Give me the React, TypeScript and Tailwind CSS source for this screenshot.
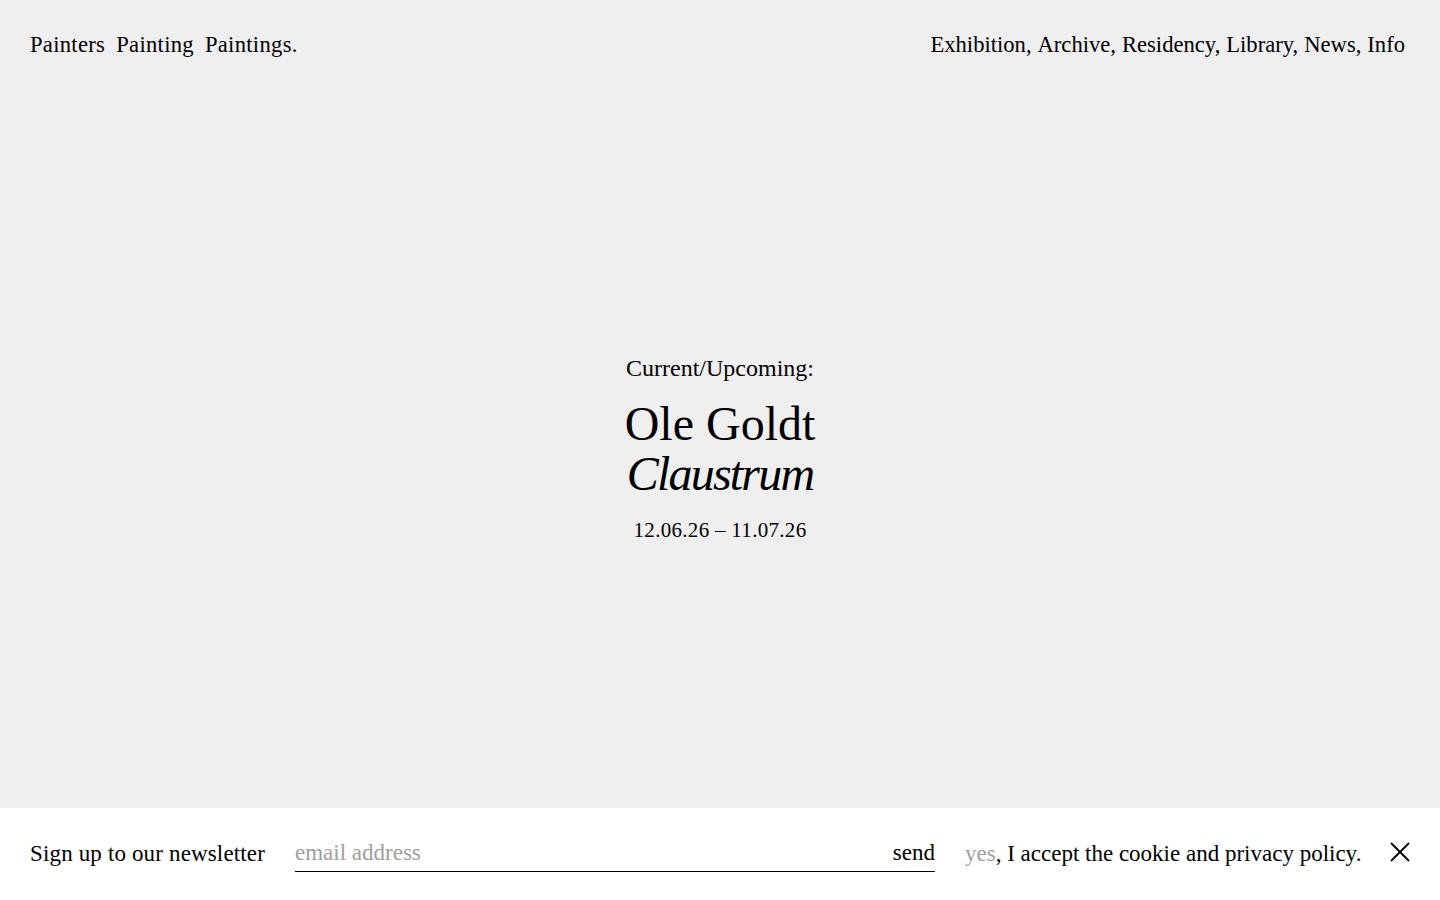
const NAV = ["Exhibition", "Archive", "Residency", "Library", "News", "Info"];

export default function App() {
  return (
    <div
      className="flex h-screen flex-col bg-[#efefef] text-black"
      style={{ fontFamily: '"Liberation Serif", "DejaVu Serif", serif' }}
    >
      {/* Header */}
      <header className="flex h-[90px] items-start justify-between px-[30px] pt-[30px] text-[22.6px] leading-[30px]">
        <div className="flex gap-[11px] tracking-[0.3px]">
          <span>Painters</span>
          <span>Painting</span>
          <span>Paintings.</span>
        </div>
        <nav className="flex gap-[6px] pr-[5px]">
          {NAV.map((item, i) => (
            <a key={item} href="#" className="hover:opacity-60">
              {item}
              {i < NAV.length - 1 ? "," : ""}
            </a>
          ))}
        </nav>
      </header>

      {/* Current exhibition */}
      <main className="flex flex-1 flex-col items-center justify-center">
        <p className="text-[24px] leading-[28px]">Current/Upcoming:</p>
        <h1 className="mt-[17px] text-[48px] leading-[50px]">Ole Goldt</h1>
        <h2 className="text-[48px] italic leading-[50px] tracking-[-1.8px]">Claustrum</h2>
        <p className="mt-[17px] text-[21px] leading-[28px] tracking-[0.3px]">
          12.06.26 – 11.07.26
        </p>
      </main>

      {/* Newsletter bar */}
      <footer className="flex h-[92px] items-center bg-white px-[30px] text-[23px]">
        <span className="w-[265px] shrink-0 tracking-[0.15px]">Sign up to our newsletter</span>
        <div className="flex w-[640px] items-end border-b border-black">
          <input
            type="email"
            placeholder="email address"
            className="flex-1 bg-transparent outline-none placeholder:text-[#a0a0a0]"
          />
          <button className="shrink-0">send</button>
        </div>
        <p className="ml-[30px]">
          <span className="text-[#a0a0a0]">yes</span>, I accept the cookie and privacy policy.
        </p>
        <button className="ml-auto -mt-[4px]" aria-label="Close">
          <svg width="20" height="20" viewBox="0 0 20 20" fill="none" stroke="black" strokeWidth="1.8">
            <path d="M1 1 19 19M19 1 1 19" />
          </svg>
        </button>
      </footer>
    </div>
  );
}
